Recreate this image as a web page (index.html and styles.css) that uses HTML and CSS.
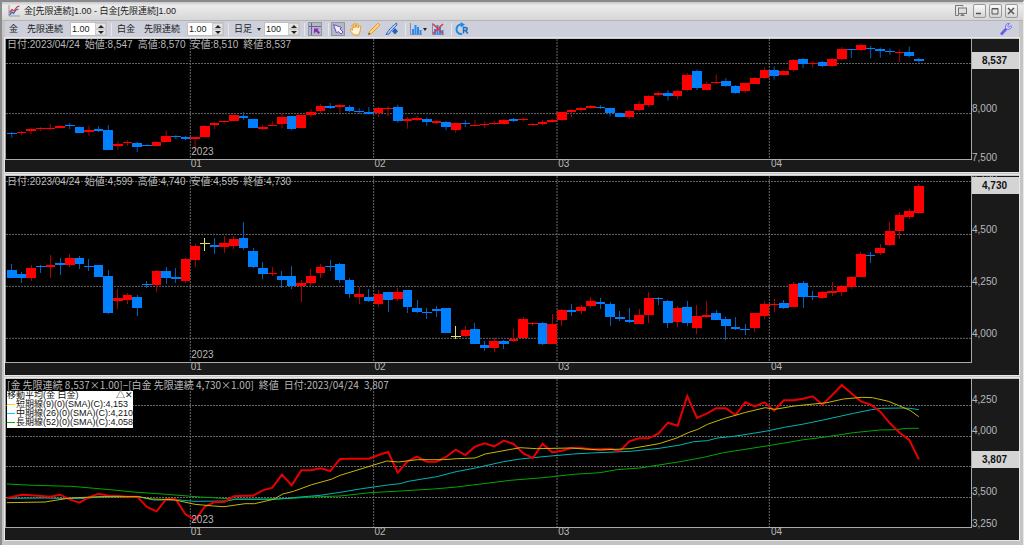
FILE: index.html
```html
<!DOCTYPE html>
<html lang="ja">
<head>
  <meta charset="UTF-8" />
  <title>金[先限連続]1.00 - 白金[先限連続]1.00</title>
  <link rel="stylesheet" href="styles.css">
</head>
<body>

  <div class="window">
    <header class="titlebar">
      <svg class="icon" viewBox="0 0 12 12">
        <path d="M1 0V11H12" fill="none" stroke="#999" />
        <path d="M1.500 10L4 7L5.500 8.500L8 5L10.500 4" fill="none" stroke="#36c" stroke-width="1.200" />
        <path d="M1.500 7.500L4 4.500L6 6L9 2L11.500 1" fill="none" stroke="#d33" stroke-width="1.200" />
      </svg>
      <h1>金[先限連続]1.00 - 白金[先限連続]1.00</h1>
      <button class="detach" aria-label="切り離し">
        <svg viewBox="0 0 12 12"><path d="M8 1.500V.5H.5V10.500H3.500V3.500" fill="none" stroke="#777" /><rect x="3.500" y="3" width="8" height="5.500" fill="#ddd" stroke="#777" /><path d="M5 11L7.500 8.500L10 11Z" fill="#777" /></svg>
      </button>
      <button class="win" aria-label="最小化"><svg viewBox="0 0 12 12"><path d="M3 8.500H8" stroke="#555" stroke-width="1.500" /></svg></button>
      <button class="win" aria-label="最大化"><svg viewBox="0 0 12 12"><path d="M3 3.500H9V9H3ZM3 4H9" fill="none" stroke="#555" /></svg></button>
      <button class="win" aria-label="閉じる"><svg viewBox="0 0 12 12"><path d="M3 3L9 9M9 3L3 9" stroke="#555" stroke-width="1.500" /></svg></button>
    </header>

    <div class="toolbar">
      <label class="name" for="goldRate">金<span>先限連続</span></label>
      <div class="spin">
        <input id="goldRate" type="text" value="1.00" />
        <div class="arrows"><button class="up" aria-label="増"></button><button class="down" aria-label="減"></button></div>
      </div>
      <i class="sep"></i>
      <label class="name" for="platinumRate">白金<span>先限連続</span></label>
      <div class="spin">
        <input id="platinumRate" type="text" value="1.00" />
        <div class="arrows"><button class="up" aria-label="増"></button><button class="down" aria-label="減"></button></div>
      </div>
      <i class="sep"></i>
      <div class="period">
        <select aria-label="足種"><option>日足</option></select>
        <i class="caret"></i>
      </div>
      <div class="spin short">
        <input type="text" value="100" aria-label="本数" />
        <div class="arrows"><button class="up" aria-label="増"></button><button class="down" aria-label="減"></button></div>
      </div>
      <i class="sep"></i>
      <button class="tool on" aria-label="十字線">
        <svg viewBox="0 0 14 14"><path d="M3.500 1V13M1 4.500H13" stroke="#6a5aa8" /><path d="M6 6.500H11L9.500 8L12 10.500L10.500 12L8 9.500L6 11.500Z" fill="#8a2bb8" /></svg>
      </button>
      <i class="sep"></i>
      <button class="tool on" aria-label="選択">
        <svg viewBox="0 0 14 14"><path d="M2.500 2.500L10.500 5.500L9 7L12 10L10 12L7 9.500L5.500 11Z" fill="#f2eeff" stroke="#6a50c8" /></svg>
      </button>
      <button class="tool" aria-label="移動">
        <svg viewBox="0 0 14 14"><path d="M5 13C3.500 11.500 2 9.500 1 8C1 7 2 6.800 3.500 8.200L3 3.500C3 2.500 4.200 2.500 4.500 3.500L5 6L5 2C5.200 1 6.500 1 6.600 2L7 5.500L7.600 2.300C8 1.300 9.200 1.600 9.100 2.700L9 6L10.300 4C11 3.200 12 3.700 11.700 4.700C11.200 7 11.500 10.500 9.500 13Z" fill="#fff2d8" stroke="#e39a28" /></svg>
      </button>
      <button class="tool" aria-label="鉛筆">
        <svg viewBox="0 0 14 14"><path d="M1.500 12.500L2.500 9.500L10.500 1.500C11.500 1 13 2.500 12.500 3.500L4.500 11.500Z" fill="#ffd27a" stroke="#e39a28" /><path d="M1 13L2 10.500L3.500 12Z" fill="#555" /></svg>
      </button>
      <button class="tool" aria-label="編集">
        <svg viewBox="0 0 14 14"><path d="M1 12.500C3 9 6 5 11.500 1L12 3C9 6 6 8.500 4 12Z" fill="#a8d0f8" stroke="#3868c0" /><path d="M10 6L13 9.300L10 12.500L7 9.300Z" fill="#2c60b8" /></svg>
      </button>
      <i class="sep"></i>
      <button class="tool wide" aria-label="チャート種類">
        <svg viewBox="0 0 14 14"><path d="M1.500 1V12.500H13" fill="none" stroke="#88a" /><path d="M4 7V12M6.500 3V12M9 5V12M11.500 8V12" stroke="#2a8cf0" stroke-width="2" /></svg>
        <i class="caret"></i>
      </button>
      <button class="tool" aria-label="チャート削除">
        <svg viewBox="0 0 14 14"><path d="M1.500 1V12.500H13" fill="none" stroke="#88a" /><path d="M4 7V12M6.500 3V12M9 5V12M11.500 8V12" stroke="#2a8cf0" stroke-width="2" /><path d="M2 2L12 11.500M12 2L2 11.500" stroke="#e8383c" stroke-width="1.600" /></svg>
      </button>
      <i class="sep"></i>
      <button class="tool" aria-label="更新">
        <svg viewBox="0 0 14 14"><path d="M7 2.500C3.500 2 1.500 4.500 1.500 7.500C1.500 10.500 4 12.500 7 12" fill="none" stroke="#1c8ce0" stroke-width="2" /><path d="M5.500 0L10 2.500L6 5.500Z" fill="#1c8ce0" /><path d="M8.500 11.500V5.500H10.500C12.800 5.500 12.800 8.500 10.500 8.500H9M10.500 8.500L12.800 11.500" fill="none" stroke="#1c70c8" stroke-width="1.500" /></svg>
      </button>
      <button class="tool settings" aria-label="設定">
        <svg viewBox="0 0 14 14"><path d="M2 12.500L7.500 6.500" stroke="#6a5ae8" stroke-width="2.600" /><path d="M10.500 1.500C8 1 6 3 6.500 5.500C7.500 8 10.500 8 12.500 5.500L12 3.500L10 5.500L8.500 4Z" fill="#d8d4ff" stroke="#7a6cf0" /></svg>
      </button>
    </div>

    <main class="panes">
      <section class="pane gold" id="gold">
        <div class="plot">
          <svg class="chart" viewBox="-0.6 39 100 120" preserveAspectRatio="none"></svg>
          <p class="info"><span>日付:2023/04/24</span><span>始値:8,547</span><span>高値:8,570</span><span>安値:8,510</span><span>終値:8,537</span></p>
        </div>
        <div class="months"></div>
        <div class="prices"></div>
      </section>

      <section class="pane platinum" id="platinum">
        <div class="plot">
          <svg class="chart" viewBox="-0.6 176 100 186" preserveAspectRatio="none"></svg>
          <p class="info"><span>日付:2023/04/24</span><span>始値:4,599</span><span>高値:4,740</span><span>安値:4,595</span><span>終値:4,730</span></p>
        </div>
        <div class="months"></div>
        <div class="prices"></div>
      </section>

      <section class="pane spread" id="spread">
        <div class="plot">
          <svg class="chart" viewBox="-0.6 379 100 148" preserveAspectRatio="none"></svg>
          <p class="info"><span>[金 先限連続 8,537×1.00]−[白金 先限連続 4,730×1.00]</span><span>終値</span><span>日付:2023/04/24</span><span>3,807</span></p>
          <div class="legend">
            <p class="head">移動平均(金 白金)<span>△✕</span></p>
            <p class="short-term">短期線(9)(0)(SMA)(C):4,153</p>
            <p class="mid-term">中期線(26)(0)(SMA)(C):4,210</p>
            <p class="long-term">長期線(52)(0)(SMA)(C):4,058</p>
          </div>
        </div>
        <div class="months"></div>
        <div class="prices"></div>
      </section>
    </main>
  </div>

  <script src="script.js"></script>
</body>
</html>
```

FILE: styles.css
```css
* { box-sizing: border-box; }
body {
  margin: 0;
  background: #c4c4c4;
  font-family: "Liberation Sans", "Noto Sans CJK JP", sans-serif;
  font-size: 10px;
  line-height: 12px;
  color: #222;
}
p, h1 { margin: 0; }
button, input, select {
  margin: 0;
  padding: 0;
  border: 0;
  background: none;
  color: inherit;
  font: inherit;
}
svg { display: block; }

.window {
  display: flex;
  flex-direction: column;
  height: 100vh;
  min-height: 400px;
  border-top: 2px solid #8a8a90;
  border-left: 2px solid #8c8c8c;
  border-right: 1px solid #e8e8e8;
  padding: 0 4px 5px 3px;
}

/* title bar */
.titlebar {
  display: flex;
  align-items: center;
  gap: 3px;
  height: 19px;
  margin: 0 -4px 0 -3px;
  padding: 0 5px 0 6px;
  background: linear-gradient(#c8c8c8, #ececec 20%, #d6d6d6);
  border-bottom: 1px solid #b4b4b4;
}
.titlebar .icon { width: 12px; height: 12px; }
.titlebar h1 {
  flex: 1;
  padding-left: 1px;
  font-size: 9px;
  font-weight: normal;
}
.titlebar button svg { width: 12px; height: 12px; }
.detach { margin-right: 3px; }
.win {
  width: 13px;
  height: 14px;
  border: 1px solid #999;
  border-radius: 2px;
  background: linear-gradient(#fafafa, #d4d4d4);
}
.win svg { margin: 0 -1px; }

/* toolbar */
.toolbar {
  display: flex;
  align-items: center;
  height: 17px;
  padding: 0 6px 0 4px;
  background: #cdd0da;
  border-bottom: 1px solid #a4abb8;
  font-size: 9px;
}
.name { display: flex; gap: 9px; margin-right: 7px; }
.spin {
  display: flex;
  width: 37px;
  height: 14px;
  background: #fff;
  border: 1px solid #c0c0c4;
}
.spin.short { width: 36px; margin-left: 3px; }
.spin input {
  flex: 1;
  min-width: 0;
  padding-left: 1px;
  font-size: 9px;
}
.arrows { display: flex; flex-direction: column; width: 11px; background: #e4e4e4; }
.arrows button {
  display: flex;
  flex: 1;
  align-items: center;
  justify-content: center;
  border: 1px solid #ccc;
}
.arrows button::before {
  content: "";
  border: 3px solid transparent;
}
.up::before { border-top-width: 0 !important; border-bottom-color: #222 !important; }
.down::before { border-bottom-width: 0 !important; border-top-color: #222 !important; }
.sep {
  width: 1px;
  height: 13px;
  margin: 0 5px 0 4px;
  background: #e8e8ec;
}
.period { display: flex; align-items: center; }
.period select { appearance: none; width: 23px; }
.caret {
  border: 2px solid transparent;
  border-top: 3px solid #222;
  border-bottom: 0;
}
.tool {
  display: flex;
  align-items: center;
  width: 14px;
  height: 14px;
  margin-right: 4px;
}
.tool svg { flex: none; width: 14px; height: 14px; }
.tool.on { margin: 0 0 0 -2px; background: #b4b8c2; border: 1px solid #92969f; }
.tool.on svg { margin: -1px; }
.tool.on + .sep { margin-left: 6px; margin-right: 4px; }
.tool.on + .tool { margin-left: 4px; }
.tool.wide { width: 18px; }
.tool + .sep { margin-left: 2px; margin-right: 3px; }
.settings { margin: 0 0 0 auto; }

/* chart panes */
.panes { display: flex; flex: 1; flex-direction: column; gap: 3px; min-height: 0; }
.pane {
  display: grid;
  grid-template-columns: 1fr 47px;
  grid-template-rows: 1fr 13px;
  min-height: 0;
  background: #1a1a1a;
  border-top: 1px solid #c8c8c8;
  outline: 1px solid #e8e8e8;
  color: #b8b8b8;
}
.gold { flex: 134 0 0; }
.platinum { flex: 200 0 0; }
.spread { flex: 162 0 0; }
.plot {
  position: relative;
  overflow: hidden;
  background: #000;
  border-left: 1px solid #999;
  border-right: 1px solid #aaa;
}
.chart { position: absolute; width: 100%; height: 100%; }
.info {
  position: relative;
  display: flex;
  gap: 5px;
  padding-left: 1px;
  white-space: pre;
}
.spread .info { font-family: "Noto Sans CJK JP", sans-serif; }
.months {
  position: relative;
  border-top: 1px solid #aaa;
}
.months span { position: absolute; padding-left: 1px; line-height: 8px; }
.prices {
  position: relative;
  grid-column: 2;
  grid-row: 1 / 3;
  overflow: hidden;
}
.prices span { position: absolute; left: 0; transform: translateY(-11px); }
.prices b {
  position: absolute;
  left: 0;
  right: 0;
  padding-left: 10px;
  transform: translateY(-9px);
  background: #d4d4d4;
  color: #111;
  line-height: 17px;
}
.year { position: absolute; bottom: 1px; padding-left: 1px; }

.legend {
  position: absolute;
  top: 12px;
  left: 1px;
  width: 126px;
  background: #fff;
  color: #111;
  font-size: 9px;
  line-height: 9px;
  padding-bottom: 1px;
  white-space: nowrap;
}
.legend .head { display: flex; justify-content: space-between; }
.legend p:not(.head) { display: flex; align-items: center; gap: 1px; }
.legend p:not(.head)::before { content: ""; width: 8px; height: 1px; background: currentColor; }
.legend .short-term::before { background: #f0e000 !important; }
.legend .mid-term::before { background: #00d8e8 !important; }
.legend .long-term::before { background: #00b400 !important; }

.grid { stroke: #686868; stroke-width: 1; stroke-dasharray: 2 1; }
.line { fill: none; vector-effect: non-scaling-stroke; }
.grid, .wick { vector-effect: non-scaling-stroke; }
.wick { stroke-width: 1; shape-rendering: crispEdges; }
.body { shape-rendering: crispEdges; }
.r { fill: #f00; stroke: #b00000; }
.b { fill: #0080ff; stroke: #0060b8; }
.y { fill: #e0e070; stroke: #e0e070; }
.body.r, .body.b, .body.y { stroke: none; }
.price { stroke: #e80000; stroke-width: 2; }
.short { stroke: #c8b800; }
.mid { stroke: #00b4b4; }
.long { stroke: #00a800; }
.short, .mid, .long { stroke-width: 1; }
```

FILE: script.js
```js
// one row per day: colour, body top, body bottom, wick top, wick bottom
const gold = `
b 132.5 134 132 137.5|r 132 133 131 135|r 129 131.3 128 134|r 128 129 127 131|r 127.7 128.7 124 130
r 125.7 127.5 125 128|b 125.2 126.2 123 129|b 127 132.7 126.5 133|r 129.5 131.5 125.5 136|b 129 130.7 126 132
b 130.3 149.7 125 150|r 143.7 146.3 141 149.5|r 141.7 143 140 145.5|b 143.3 147.3 142 152|b 145 146 144.5 146
r 141.7 145.7 141 146|r 135.7 141.7 130.5 142|b 136.3 137.3 135 139|b 137.3 138.7 136 140|r 137.3 138.5 137 150
r 125.5 137 125 137|r 123 125 122 129|r 121.3 122.3 120 123.5|r 115.3 121 114.5 121|b 115.5 118 112 120
b 118.5 127.7 118.5 128|r 126.5 129 124.5 130|r 124.5 125.5 121 126|r 117 124.3 113 128|b 116 129 116 130
r 115 127.7 115 128|r 112 115 109 117|r 106 110.7 104 113|b 106 107.7 103 109|r 105 106.5 104 113
b 107 110.7 105 112|b 110.5 111.5 108 114|b 112.3 113.7 107 114.5|r 108.3 113.3 107 117|r 108.3 109.3 106 116
b 107 121 104.5 122.5|r 119.3 121.3 117 128.5|r 117.7 120 115.5 121|b 118.7 121.7 117.5 125.5|r 121.3 122.5 120 124
b 121.7 126.7 121 130|r 123.3 130 123 132.5|b 123 124.3 120 127|r 124.7 125.7 120 126|r 124 125 121.5 128
r 123 124 120.5 125|r 120 123.7 118.5 124.5|b 119 120.7 118 122|r 118.7 119.7 117.5 121.5|r 124 125.3 123 126
r 122 124.3 120 125|r 120 122 118.5 122.5|r 112 120 112 121|r 110.3 111.7 109 117|r 108 109.7 107 111.5
r 106.3 107.5 105 109|b 106.7 108 105 109|b 108.3 113 107.5 116.5|b 113 116.7 112.5 117|r 110.7 116.7 110 119
r 104.3 110 101 111.5|r 96.3 105 95 107|r 93.3 95.3 91 96.5|b 93.3 96 90 100.5|r 91 96 89.5 99
r 74.7 89.7 73 91.5|b 71.3 88.3 69.5 90|r 84 90 81.5 90.5|r 82.3 83.3 74.5 84|b 81.3 85.7 78 87
b 85.7 92.7 85 93.5|r 83.3 91.3 82.5 93|r 77.7 83.7 77 84|r 70 78 67.5 79|b 70 76.3 66.5 79.5
r 71 75 70 75.5|r 59.7 70.3 59 71.5|b 59 64 58 68|r 62.7 64 61.5 67.5|b 62 65.7 61 67
r 59 66.3 58 67|r 48.7 58.7 47 60.5|b 49 50 49 58|r 45.3 50 43.5 51|b 47.5 48.5 46 58.5
b 48.7 51 47.5 58|b 50.5 51.5 48.5 55|r 51.5 53 49.5 62|b 52 56 46.5 57.5|b 59 60.5 57.5 62.5`;

const platinum = `
b 270 277.7 264.5 278|b 273.7 278 272.5 283.5|r 268.3 278.3 265 281.5|b 266 267.2 265.5 273.5|r 265.5 266.7 255 278
b 263 265.5 258 275|r 258.3 265.3 254 267|b 258.3 263.7 256 269|b 266 267.3 259.5 271|b 265.3 277 265 277.5
b 276.3 313 270 314.5|r 298 301.3 289.5 309|r 295.3 299.7 293 304.5|b 297.3 308.3 295 316.5|b 284 285.2 281.5 288
r 271 284.7 270 292|b 271 277.7 267 284|b 277 279 268 283|r 258.7 280.7 258 283.5|r 245.7 259.7 244 267
y 243.5 244.5 238 251|b 245 247 238 254|r 243 247 236.5 253|r 238.7 245.7 236.5 249.5|b 237.7 248 222 250
b 251 267.5 248 268|b 268.5 273.7 262 279.5|r 273 274 267 276.5|b 275.7 280 271 288|b 275.7 286.3 266 289.5
r 283 286.3 280.5 302.5|r 276.3 283.3 269 286|r 266.7 273.3 264.5 278|b 266 267 260.5 271|b 263.7 280 263 283
b 280.3 294.3 278 298|r 293.7 297.3 287.5 304|b 296.7 301.3 289.5 302|r 294.3 304 290.5 307|b 292.3 299.7 292 312
r 292.3 299 288 301.5|b 290.3 307.3 290 313.5|b 308.3 312.3 300 313|b 312.3 313.3 308.5 319.5|b 309.3 310.7 306 317
b 308.3 333 308 333.5|y 335.8 336.8 326 339.5|r 330.3 335.7 326 337.5|b 329 343.7 323 344.5|b 344.7 348.3 341 351
r 341 348.3 338.5 352.5|b 341 343.7 340 349.5|r 339.3 341 329 342|r 319 337.7 317.5 338.5|r 323 324.2 322 326
b 323.3 343.7 322.5 345|r 324.3 343.7 314 344|r 310 320 309.5 326|b 309.7 311.7 304.5 316.5|r 307 311.3 305 314.5
r 300.7 306 297.5 308.5|b 301.7 303.7 298 309|b 304 317 302.5 326.5|b 317.3 319 311.5 321|b 320.3 322 308.5 323.5
r 315 324 309.5 324.5|r 298.3 315.3 292.5 323.5|b 298 299 297 305|b 301.3 323.3 300.5 328.5|r 307.7 321.7 306 327
b 307 323.3 301.5 326|r 315.7 327.7 305 334.5|r 315 317 301 318.5|b 313.3 320 310 320.5|b 319 325.7 317.5 340
b 326.7 328.7 317 330.5|b 329 330.5 324 335|r 313.3 327.7 313 332|r 304 316 301.5 319.5|r 304 305 299 312
b 303 308.3 300 309|r 284 306.7 282 307.5|b 283.3 297 281.5 308|b 296 297.2 291.5 300.5|r 292 298 291 299
r 291.3 293.3 282.5 296.5|r 286.3 292 285 296.5|r 277 287.3 276 289|r 254.3 277 252 277.5|b 255 256 252.5 263.5
r 248 252.7 244 255.5|r 231 244.7 222 246|r 215.3 230.7 212.5 239|r 211.3 217 209 219|r 186 213.3 184 214`;

// spread, one value per day, in thirds of a unit below the pane's origin
const spread = [
  381, 374, 376, 378, 380, 374, 388, 398, 382, 371, 377, 378, 380, 380, 411, 424, 387, 388, 433, 450,
  410, 396, 396, 379, 377, 377, 361, 353, 314, 346, 301, 301, 295, 303, 267, 266, 266, 266, 255, 246,
  308, 274, 260, 275, 275, 261, 239, 255, 230, 220, 229, 212, 222, 250, 264, 221, 247, 242, 234, 234,
  238, 238, 236, 243, 214, 205, 205, 191, 158, 167, 78, 144, 131, 115, 115, 135, 97, 109, 97, 122,
  91, 91, 86, 79, 104, 76, 45, 70, 94, 104, 125, 160, 188, 210, 268
];

// moving averages as x,y knots in the same thirds
const shortTerm = '20,398 135,396 165,391 210,384 300,380 415,380 455,387 520,389 585,403 640,408 672,410 735,401 763,401 820,388 848,372 880,364 935,344 993,328 1020,316 1095,293 1160,273 1195,276 1252,269 1330,269 1370,266 1425,264 1455,252 1560,233 1610,236 1710,234 1800,240 1890,236 1977,221 2030,204 2064,188 2093,178 2122,163 2170,146 2237,127 2295,113 2324,118 2382,108 2480,98 2530,87 2585,82 2617,83 2665,94 2730,121 2756,140';
const midTerm = '20,385 130,384 240,386 300,381 415,380 460,390 540,390 580,394 680,393 705,388 830,388 900,381 960,376 1020,367 1085,356 1170,344 1200,341 1224,334 1310,320 1368,305 1426,294 1510,275 1560,267 1629,260 1720,252 1774,249 1890,244 1977,235 2040,225 2080,215 2122,212 2151,204 2208,198 2295,184 2353,172 2411,162 2469,150 2560,130 2614,119 2643,115 2701,114 2730,115 2756,119';
const longTerm = '20,342 100,346 215,349 330,359 400,366 500,373 600,381 700,387 790,387 880,385 930,381 1020,378 1110,368 1200,363 1300,357 1370,351 1450,341 1530,331 1629,323 1720,313 1800,308 1850,299 1919,294 1970,286 2040,275 2110,262 2170,248 2305,227 2411,209 2469,202 2560,188 2640,180 2685,179 2720,175 2756,175';

const months = [['01', 19], ['02', 38], ['03', 57], ['04', 79]];
const SLOTS = 100;

function monthLeft(day) {
  return (day + 0.1) / SLOTS * 100 + '%';
}

function gridLines(ys, top, bottom) {
  const h = ys.map(y => `<line class="grid" x1="-0.6" x2="99.4" y1="${y}" y2="${y}" />`);
  const v = months.map(m => `<line class="grid" x1="${m[1] - 0.5}" x2="${m[1] - 0.5}" y1="${top}" y2="${bottom}" />`);
  return h.concat(v).join('');
}

function candles(text) {
  return text.trim().split(/[|\n]/).map((row, i) => {
    const [c, top, bottom, high, low] = row.split(' ');
    return `<line class="wick ${c}" x1="${i}" x2="${i}" y1="${high}" y2="${low}" />` +
      `<rect class="body ${c}" x="${i - 0.5}" y="${top}" width="1" height="${bottom - top}" />`;
  }).join('');
}

function line(points, name) {
  const d = points.map(p => p[0].toFixed(2) + ',' + p[1].toFixed(2)).join(' ');
  return `<polyline class="line ${name}" points="${d}" />`;
}

function average(text, name) {
  return line(text.split(' ').map(p => {
    const [x, y] = p.split(',').map(Number);
    return [(x - 35) / 28.95, 370 + y / 3];
  }), name);
}

function drawPane(id, top, height, ys, labels, tag, series) {
  const pane = document.getElementById(id);
  pane.querySelector('.chart').innerHTML = gridLines(ys, top, top + height) + series;
  pane.querySelector('.plot').insertAdjacentHTML('beforeend',
    `<span class="year" style="left: ${monthLeft(19)}">2023</span>`);
  pane.querySelector('.months').innerHTML = months
    .map(m => `<span style="left: ${monthLeft(m[1])}">${m[0]}</span>`).join('');

  // the price column is 13px taller than the plot
  const at = y => `calc((100% - 13px) * ${(y - top) / height})`;
  pane.querySelector('.prices').innerHTML =
    labels.map(l => `<span style="top: ${at(l[1])}">${l[0]}</span>`).join('') +
    `<b style="top: ${at(tag[1])}">${tag[0]}</b>`;
}

drawPane('gold', 39, 120, [63.5, 113.5],
  [['8,000', 113.5], ['7,500', 163]], ['8,537', 61], candles(gold));

drawPane('platinum', 176, 186, [181.5, 234.5, 286.5, 338.5],
  [['4,750', 181.5], ['4,500', 234.5], ['4,250', 286.5], ['4,000', 338.5]], ['4,730', 186], candles(platinum));

drawPane('spread', 379, 148, [405.5, 436.5, 466.5, 497.5],
  [['4,250', 405.5], ['4,000', 436.5], ['3,500', 497.5], ['3,250', 528.5]], ['3,807', 460.5],
  average(longTerm, 'long') + average(midTerm, 'mid') +
  line([[-0.5, 498]].concat(spread.map((y, i) => [i, 370 + y / 3])), 'price') +
  average(shortTerm, 'short'));
```
